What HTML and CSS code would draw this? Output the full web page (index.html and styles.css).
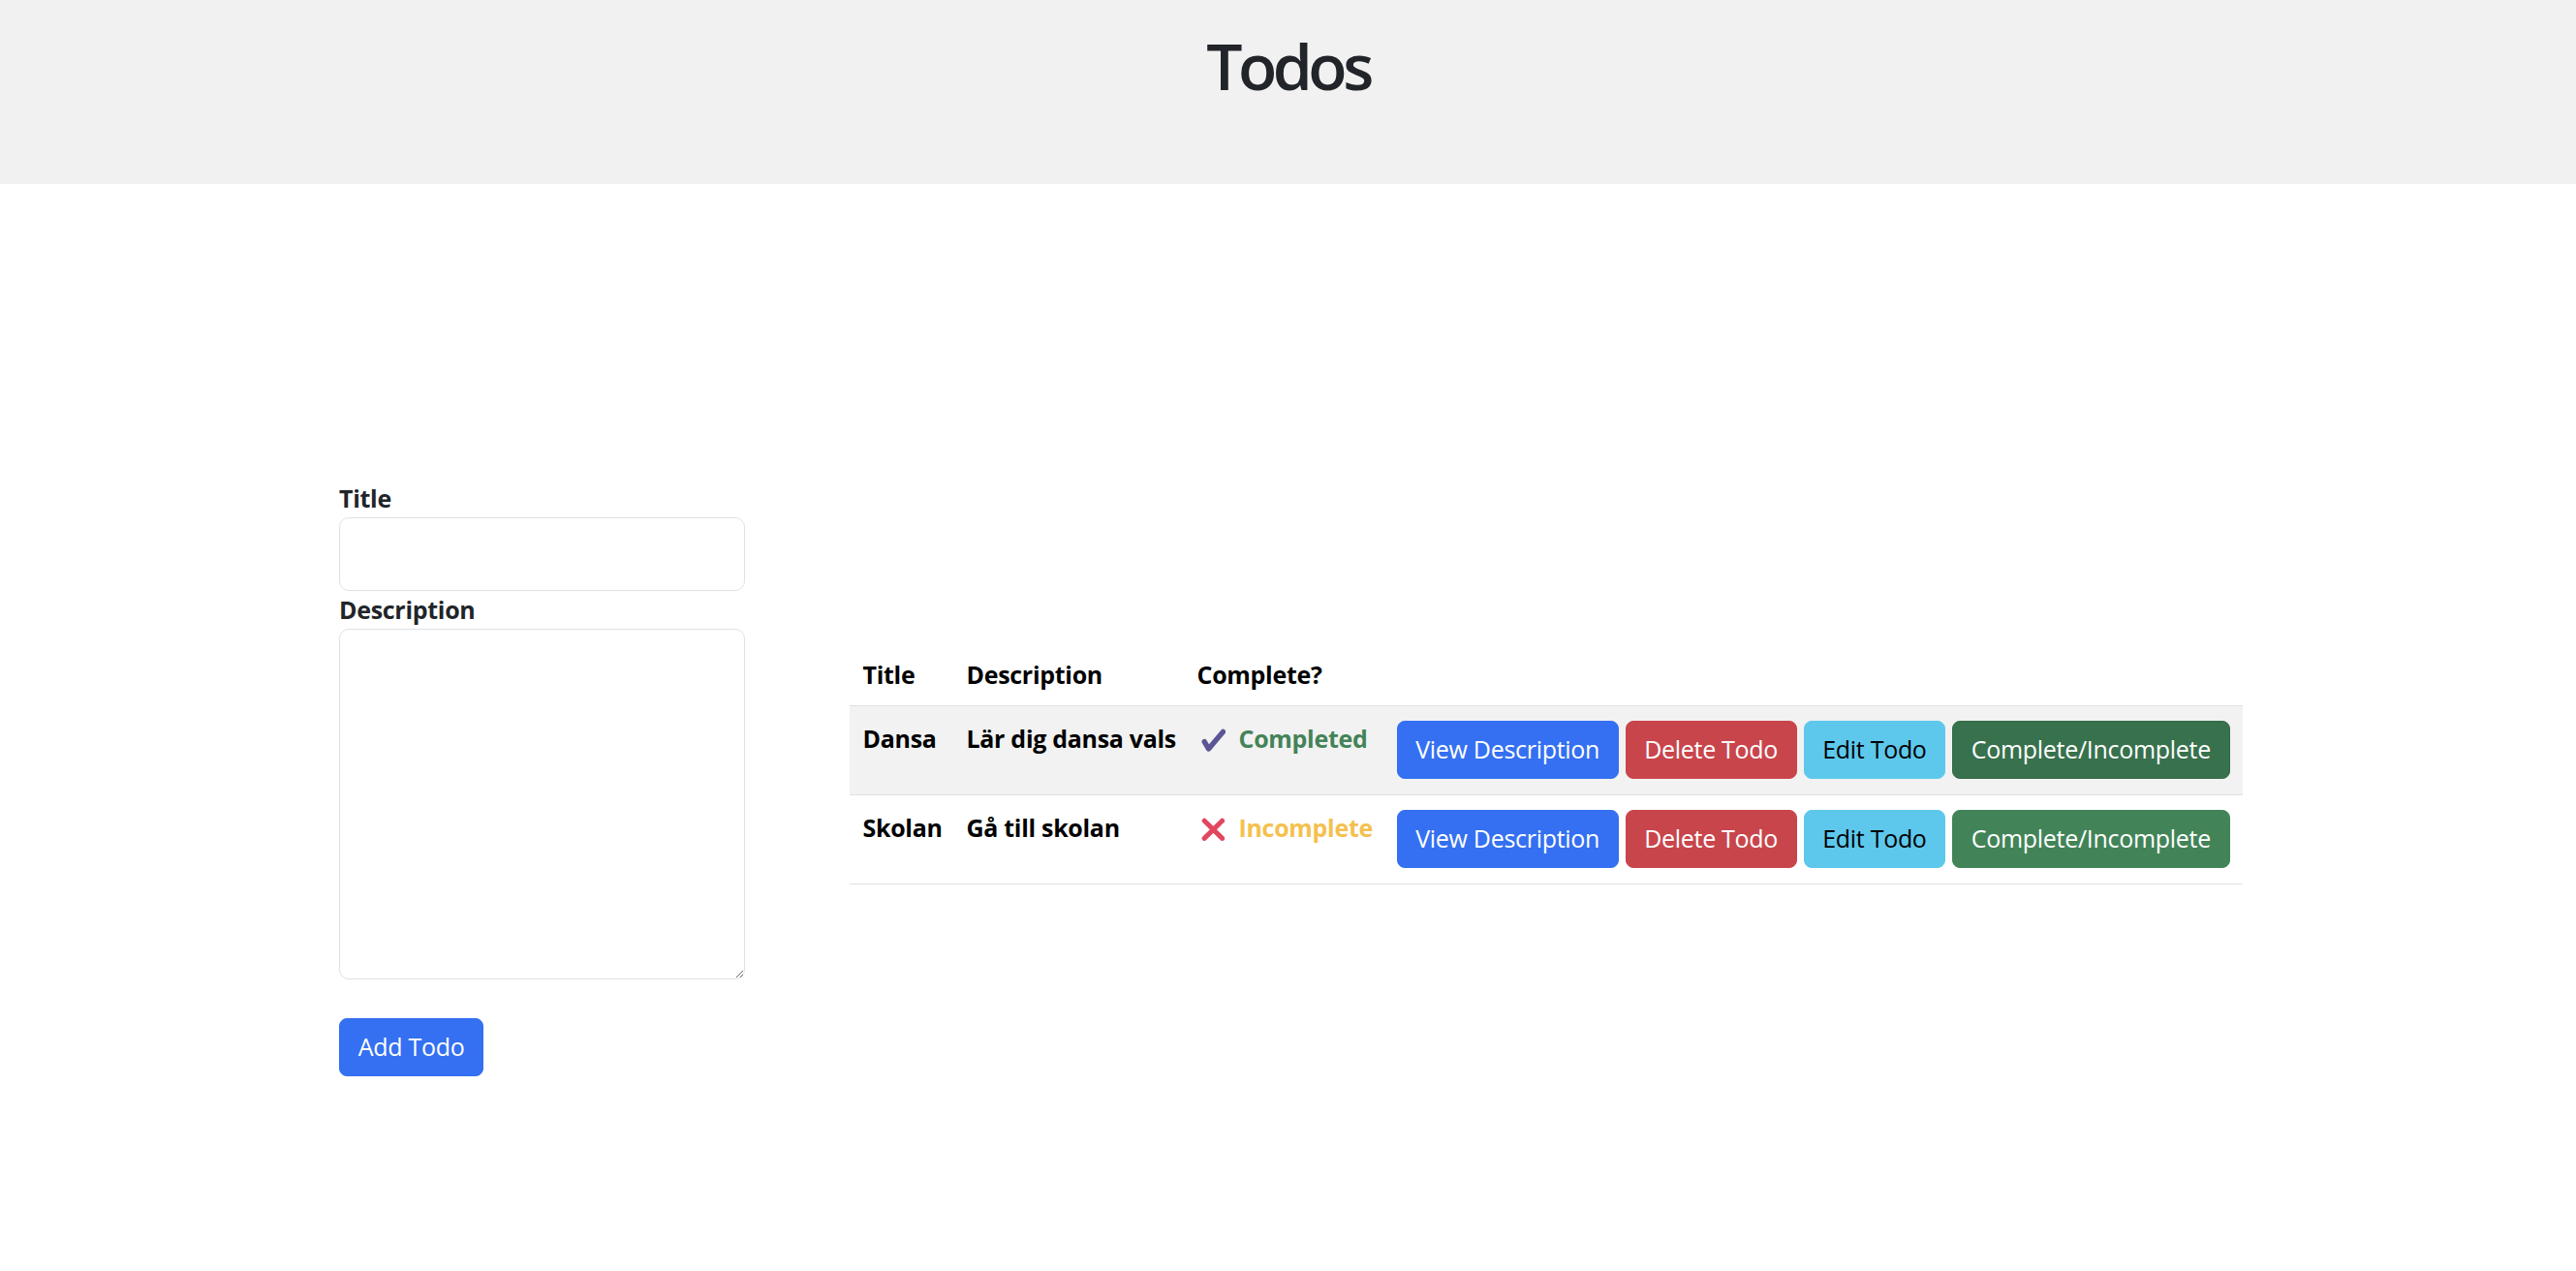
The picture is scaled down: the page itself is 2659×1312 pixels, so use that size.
FILE: index.html
```html
<!DOCTYPE html>
<html lang="sv">
<head>
<meta charset="utf-8">
<title>Todos</title>
<link rel="stylesheet" href="styles.css">
</head>
<body>
<header class="page-header">
  <h1 class="page-title">Todos</h1>
</header>
<main class="content">
  <form class="todo-form">
    <label class="field-label" for="title">Title</label>
    <input class="field-input" id="title" type="text">
    <label class="field-label" for="description">Description</label>
    <textarea class="field-textarea" id="description"></textarea>
    <button class="btn btn-primary add-btn" type="button">Add Todo</button>
  </form>
  <table class="todo-table">
    <colgroup>
      <col class="col-title">
      <col class="col-desc">
      <col class="col-status">
      <col class="col-actions">
    </colgroup>
    <thead>
      <tr>
        <th>Title</th>
        <th>Description</th>
        <th>Complete?</th>
        <th></th>
      </tr>
    </thead>
    <tbody>
      <tr class="row-hover">
        <td>Dansa</td>
        <td>Lär dig dansa vals</td>
        <td>
          <svg class="status-icon" viewBox="0 0 25 24" aria-hidden="true"><path d="M3.2 13.6 L7.6 21 L22.4 3.4" fill="none" stroke="#5b5596" stroke-width="5.4" stroke-linecap="round" stroke-linejoin="round"/></svg><span class="status status-done">Completed</span>
        </td>
        <td>
          <div class="actions">
            <button class="btn btn-primary" type="button">View Description</button>
            <button class="btn btn-danger" type="button">Delete Todo</button>
            <button class="btn btn-info" type="button">Edit Todo</button>
            <button class="btn btn-success btn-success-hover" type="button">Complete/Incomplete</button>
          </div>
        </td>
      </tr>
      <tr>
        <td>Skolan</td>
        <td>Gå till skolan</td>
        <td>
          <svg class="status-icon" viewBox="0 0 25 24" aria-hidden="true"><path d="M3.2 3.2 L21.6 21.4 M21.6 3.2 L3.2 21.4" fill="none" stroke="#e3465f" stroke-width="5" stroke-linecap="round"/></svg><span class="status status-todo">Incomplete</span>
        </td>
        <td>
          <div class="actions">
            <button class="btn btn-primary" type="button">View Description</button>
            <button class="btn btn-danger" type="button">Delete Todo</button>
            <button class="btn btn-info" type="button">Edit Todo</button>
            <button class="btn btn-success" type="button">Complete/Incomplete</button>
          </div>
        </td>
      </tr>
    </tbody>
  </table>
</main>
</body>
</html>
```
FILE: styles.css
```css
* {
  box-sizing: border-box;
}

body {
  margin: 0;
  font-family: "Open Sans", "Noto Sans", sans-serif;
  font-size: 25px;
  line-height: 1.5;
  color: #212529;
  background: #ffffff;
}

.page-header {
  height: 190px;
  background: #f1f1f1;
  padding-top: 27.5px;
  text-align: center;
}

.page-title {
  margin: 0;
  font-size: 66px;
  font-weight: 600;
  letter-spacing: -4.5px;
  line-height: 1.2;
  color: #212529;
}

.content {
  display: flex;
  align-items: flex-start;
  padding-left: 350px;
}

.todo-form {
  width: 419px;
  margin-top: 305px;
  display: flex;
  flex-direction: column;
}

.field-label {
  display: block;
  font-weight: 700;
  letter-spacing: -0.3px;
  line-height: 38.5px;
  color: #212529;
}

.field-input,
.field-textarea {
  display: block;
  width: 100%;
  border: 1px solid #dee2e6;
  border-radius: 10px;
  background: #fff;
  font: inherit;
  padding: 9px 19px;
}

.field-input {
  height: 76px;
}

.field-textarea {
  height: 362px;
  margin-top: 1px;
}

.add-btn {
  align-self: flex-start;
  margin-top: 40px;
}

.btn {
  display: inline-block;
  font-family: inherit;
  font-size: 25px;
  font-weight: 400;
  letter-spacing: -0.3px;
  line-height: 37.5px;
  padding: 10px 18.75px;
  border: 1px solid transparent;
  border-radius: 8px;
  cursor: pointer;
  white-space: nowrap;
}

.btn-primary {
  background: #3470f1;
  border-color: #3470f1;
  color: #fff;
}

.btn-danger {
  background: #c9454c;
  border-color: #c9454c;
  color: #fff;
}

.btn-info {
  background: #5dc8ec;
  border-color: #5dc8ec;
  color: #000;
}

.btn-success {
  background: #428458;
  border-color: #428458;
  color: #fff;
}

.btn-success-hover {
  background: #38714d;
  border-color: #336b47;
}

.todo-table {
  width: 1438px;
  margin-left: 108px;
  margin-top: 473px;
  border-collapse: collapse;
  table-layout: fixed;
  color: #000;
}

.col-title { width: 107px; }
.col-desc { width: 238px; }
.col-status { width: 206px; }

.todo-table th,
.todo-table td {
  text-align: left;
  vertical-align: top;
  font-weight: 700;
  letter-spacing: -0.3px;
  padding: 15px 13.5px 12px;
  border-bottom: 1px solid #dee2e6;
  white-space: nowrap;
}

.row-hover td {
  background: #f2f2f2;
}

.actions {
  display: flex;
  gap: 6.7px;
  padding: 0.8px 0 3.8px;
}

.status-icon {
  width: 25px;
  height: 24px;
  margin-left: 4px;
  margin-right: 14px;
  vertical-align: -4.5px;
}

.status {
  font-weight: 700;
}

.status-done {
  color: #438357;
}

.status-todo {
  color: #f5c04e;
}
```
